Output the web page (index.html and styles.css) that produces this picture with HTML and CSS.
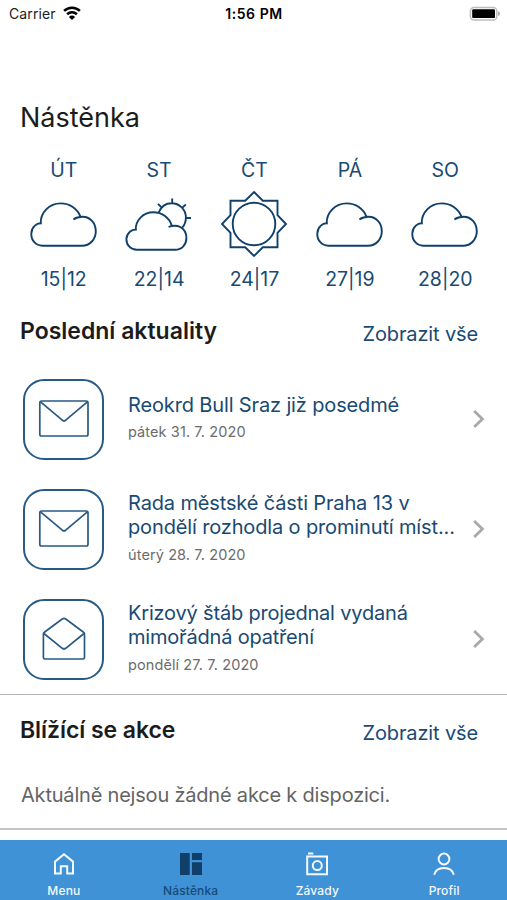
FILE: index.html
```html
<!DOCTYPE html>
<html lang="cs">
<head>
<meta charset="utf-8">
<title>Nástěnka</title>
<link rel="stylesheet" href="styles.css">
</head>
<body>
<svg class="defs" width="0" height="0" aria-hidden="true">
  <symbol id="cloud" viewBox="0 0 70 70">
    <path d="M12.8 34.5 C8 33.4 2.5 38 2.3 44.5 C2 51.5 7 56.7 13.3 56.7 H53 C61 56.7 66.8 50.3 66.8 42.3 C66.8 34 61 27.7 53.6 27.7 C50 27.7 47 28.5 44.4 30.4 M11.7 34.5 C11.4 23.5 20 14.4 31.8 14.4 C40.5 14.4 48.5 19.5 51.5 27.8"/>
  </symbol>
  <symbol id="cloud-sun" viewBox="0 0 70 70">
    <path d="M12.8 40.8 C8 39.8 2.7 44 2.4 50 C2.2 56 7 60.8 12.8 60.8 H51 C58 60.8 62.4 55.5 62.4 49 C62.4 42 57.5 36.7 51 36.7 C48.4 36.7 46.4 37.1 44.6 38 M11.7 40.8 C11.5 31.5 19 23.3 29.3 23.3 C38 23.3 45.5 28.5 47.8 36.7"/>
    <path d="M34.7 23.5 C37 17.8 41.8 14.2 47.6 14.2 C55.4 14.2 61.9 20.6 61.9 28.5 C61.9 32.4 60.5 36.2 58.2 38.7 M48.2 14.2 V9.5 M62 29 H67 M58 19.2 L61.8 15.4 M37.9 18.6 L34 15"/>
  </symbol>
  <symbol id="sun" viewBox="0 0 70 70">
    <circle cx="35" cy="35" r="21.3"/>
    <path d="M35 3 L43.8 11.7 H58.5 V26.2 L67 35 L58.5 43.8 V58.3 H43.8 L35 67 L26.2 58.3 H11.5 V43.8 L3 35 L11.5 26.2 V11.7 H26.2 Z"/>
  </symbol>
  <symbol id="mail" viewBox="0 0 56 56">
    <rect x="3.8" y="10" width="48.2" height="35" rx="1.7"/>
    <path d="M4.5 10.8 L26.3 29.2 Q28 30.5 29.7 29.2 L51.4 10.8"/>
  </symbol>
  <symbol id="mail-open" viewBox="0 0 56 56">
    <path d="M7.4 23 V46.5 Q7.4 48 8.9 48 H47 Q48.5 48 48.5 46.5 V23 Q48.5 21.8 47.5 21.2 L29.8 8 Q28 6.8 26.2 8 L8.4 21.2 Q7.4 21.8 7.4 23"/>
    <path d="M7.9 22.5 L26.3 37.3 Q28 38.6 29.7 37.3 L48 22.5"/>
  </symbol>
  <symbol id="chevron" viewBox="0 0 14 20">
    <path d="M2.2 2 L10.4 10 L2.2 18"/>
  </symbol>
</svg>

<header class="status">
  <div class="carrier"><span>Carrier</span>
    <svg class="wifi" viewBox="0 0 20 16">
      <path d="M2.1 5.9 A11.4 11.4 0 0 1 17.9 5.9 M5.1 9.2 A7.1 7.1 0 0 1 14.9 9.2"/>
      <path class="solid" d="M10 14.9 L6.9 11.9 A4.5 4.5 0 0 1 13.1 11.9 Z"/>
    </svg>
  </div>
  <div class="clock">1:56 PM</div>
  <svg class="battery" viewBox="0 0 32 16">
    <rect class="shell" x="1.4" y="1.4" width="26.4" height="12.6" rx="3.6"/>
    <rect x="3.2" y="3.3" width="22.8" height="8.8" rx="1.2"/>
    <path class="cap" d="M29 5.3 Q31 5.8 31 7.7 Q31 9.6 29 10.1 Z"/>
  </svg>
</header>

<main>
  <h1>Nástěnka</h1>
  <section class="weather">
    <div class="day"><span class="name">ÚT</span><svg><use href="#cloud"/></svg><span class="temp">15|12</span></div>
    <div class="day"><span class="name">ST</span><svg><use href="#cloud-sun"/></svg><span class="temp">22|14</span></div>
    <div class="day"><span class="name">ČT</span><svg><use href="#sun"/></svg><span class="temp">24|17</span></div>
    <div class="day"><span class="name">PÁ</span><svg><use href="#cloud"/></svg><span class="temp">27|19</span></div>
    <div class="day"><span class="name">SO</span><svg><use href="#cloud"/></svg><span class="temp">28|20</span></div>
  </section>

  <section class="news">
    <div class="heading"><h2>Poslední aktuality</h2><a class="all">Zobrazit vše</a></div>
    <article class="item">
      <div class="tile"><svg><use href="#mail"/></svg></div>
      <div class="text"><h3>Reokrd Bull Sraz již posedmé</h3><time>pátek 31. 7. 2020</time></div>
      <svg class="chevron"><use href="#chevron"/></svg>
    </article>
    <article class="item">
      <div class="tile"><svg><use href="#mail"/></svg></div>
      <div class="text"><h3>Rada městské části Praha 13 v<br>pondělí rozhodla o prominutí míst...</h3><time>úterý 28. 7. 2020</time></div>
      <svg class="chevron"><use href="#chevron"/></svg>
    </article>
    <article class="item">
      <div class="tile"><svg><use href="#mail-open"/></svg></div>
      <div class="text"><h3 class="tight">Krizový štáb projednal vydaná<br>mimořádná opatření</h3><time>pondělí 27. 7. 2020</time></div>
      <svg class="chevron"><use href="#chevron"/></svg>
    </article>
  </section>

  <section class="events">
    <div class="heading"><h2>Blížící se akce</h2><a class="all">Zobrazit vše</a></div>
    <p class="empty">Aktuálně nejsou žádné akce k dispozici.</p>
  </section>
</main>

<nav class="tabs">
  <a class="tab"><svg viewBox="0 0 24 24"><path d="M3 21.5 V9.6 L12 2.3 L21 9.6 V21.5 H15.2 V14.2 H8.8 V21.5 Z"/></svg><span>Menu</span></a>
  <a class="tab active"><svg viewBox="0 0 24 24"><path d="M1 1 H10.7 V23 H1 Z M13 1 H23 V8 H13 Z M13 10.3 H23 V23 H13 Z"/></svg><span>Nástěnka</span></a>
  <a class="tab"><svg viewBox="0 0 24 24"><path d="M2.2 4.6 H22 V22.2 H2.2 Z M3 1.6 H8.3"/><circle cx="12.3" cy="13.6" r="4.5"/></svg><span>Závady</span></a>
  <a class="tab"><svg viewBox="0 0 24 24"><circle cx="12" cy="7" r="5.4"/><path d="M2.2 22.8 C3.2 18.2 7 16 12 16 C17 16 20.8 18.2 21.8 22.8"/></svg><span>Profil</span></a>
</nav>
</body>
</html>
```

FILE: styles.css
```css
* { box-sizing: border-box; }
body {
  margin: 0;
  height: 900px;
  display: flex;
  flex-direction: column;
  overflow: hidden;
  background: #fff;
  color: #1c1c1c;
  font-family: Inter, "Liberation Sans", sans-serif;
}
svg { display: block; fill: none; stroke: #194a73; }
h1, h2, h3, p { margin: 0; font-weight: 400; white-space: nowrap; }
.defs { position: absolute; }

.status {
  height: 28px;
  padding: 0 6px 0 9px;
  display: grid;
  grid-template-columns: 1fr auto 1fr;
  align-items: center;
  font-size: 14px;
  line-height: 28px;
}
.carrier { display: flex; align-items: center; gap: 6px; letter-spacing: 0.1px; }
.wifi { width: 20px; height: 16px; stroke: #000; stroke-width: 2.6; margin-top: -2px; }
.wifi .solid { fill: #000; stroke: none; }
.clock { font-weight: 600; color: #000; letter-spacing: 0.55px; margin-right: 2px; }
.battery { width: 32px; height: 16px; justify-self: end; margin-top: -1px; fill: #000; stroke: none; }
.battery .shell { fill: none; stroke: #bdbdbd; stroke-width: 1.5; }
.battery .cap { fill: #aaa; }

main { flex: 1; }
h1 { margin: 74px 0 0 20px; font-size: 27px; line-height: 32px; }

.weather {
  margin: 21px 14px 0 16px;
  display: grid;
  grid-template-columns: repeat(5, 1fr);
  color: #194a73;
}
.day { display: flex; flex-direction: column; align-items: center; font-size: 19.5px; line-height: 30px; }
.day svg { width: 70px; height: 70px; margin: 4px 0 5px; stroke: #10406a; stroke-width: 1.9; }

.news { height: 401px; border-bottom: 1px solid #b4b4b4; }
.heading {
  height: 70px;
  padding: 0 29px 0 20px;
  display: flex;
  justify-content: space-between;
}
.heading h2 { font-size: 23px; line-height: 30px; font-weight: 600; margin-top: 22px; }
.all { font-size: 20px; line-height: 30px; margin-top: 25px; color: #194a73; letter-spacing: -0.13px; }
.item { height: 110px; padding: 0 21px 0 23px; display: flex; align-items: center; }
.tile {
  width: 81px;
  height: 81px;
  border: 2px solid #285a86;
  border-radius: 21px;
  display: grid;
  place-items: center;
}
.tile svg { width: 56px; height: 56px; stroke-width: 1.7; stroke: #285a86; }
.text { flex: 1; margin: 0 0 3px 24px; }
h3 { font-size: 20px; line-height: 24.5px; color: #194a73; letter-spacing: -0.14px; }
.tight { letter-spacing: -0.19px; }
time { display: block; margin-top: 5px; font-size: 14.5px; line-height: 20px; color: #6c6c6c; letter-spacing: 0.1px; }
.chevron { width: 14px; height: 20px; stroke: #a9a9a9; stroke-width: 2.8; }

.events { height: 135px; border-bottom: 2px solid #c4c4c4; }
.events .heading { height: 85px; }
.events .heading h2 { margin-top: 20px; letter-spacing: -0.06px; }
.events .heading .all { margin-top: 23px; }
.empty { margin-left: 21px; font-size: 20px; line-height: 30px; color: #646464; letter-spacing: -0.2px; }

.tabs {
  height: 60px;
  display: grid;
  grid-template-columns: repeat(4, 1fr);
  background: #3f92d5;
  color: #f3f9ff;
}
.tab { display: flex; flex-direction: column; align-items: center; padding: 12px 0 0 1px; font-size: 12px; line-height: 16px; font-weight: 500; letter-spacing: 0.15px; }
.tab svg { width: 24px; height: 24px; margin-bottom: 7px; stroke: #f3f9ff; stroke-width: 2; }
.active { color: #174a78; }
.active svg { fill: #10406a; stroke: none; }
```
